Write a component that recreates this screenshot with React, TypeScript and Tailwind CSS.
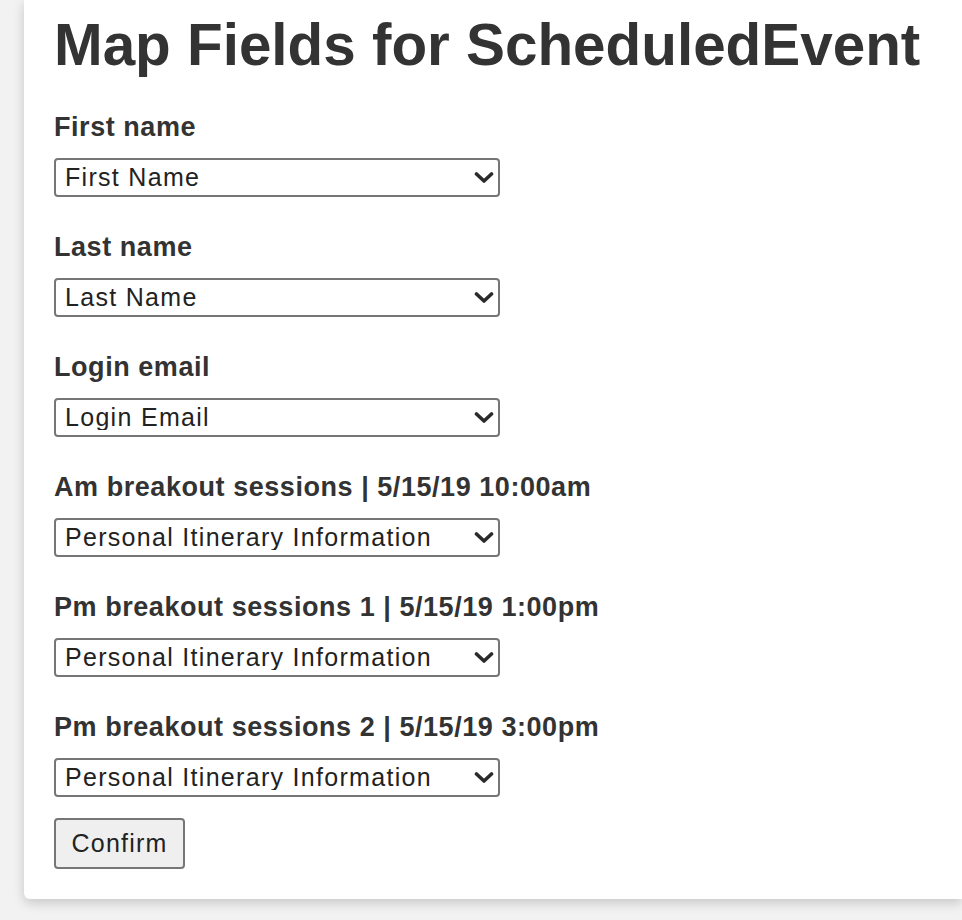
import React from "react";

const fields = [
  { label: "First name", value: "First Name" },
  { label: "Last name", value: "Last Name" },
  { label: "Login email", value: "Login Email" },
  { label: "Am breakout sessions | 5/15/19 10:00am", value: "Personal Itinerary Information" },
  { label: "Pm breakout sessions 1 | 5/15/19 1:00pm", value: "Personal Itinerary Information" },
  { label: "Pm breakout sessions 2 | 5/15/19 3:00pm", value: "Personal Itinerary Information" },
];

function Chevron() {
  return (
    <svg width="20" height="14" viewBox="0 0 20 14" className="pointer-events-none absolute right-[6px] top-[13px]">
      <path d="M2.5 3 L10 10 L17.5 3" fill="none" stroke="#2b2b2b" strokeWidth="3.6" strokeLinecap="round" strokeLinejoin="round" />
    </svg>
  );
}

export default function App() {
  return (
    <div className="min-h-[920px] bg-[#f2f2f2] text-[#333333]" style={{ fontFamily: '"Liberation Sans", Arial, Helvetica, sans-serif' }}>
      <div className="ml-[24px] rounded-bl-[6px] bg-white pb-[30px] pl-[30px] shadow-[0_4px_12px_rgba(0,0,0,0.18)]">
        <h1 className="whitespace-nowrap pt-[16px] text-[58.4px] font-bold leading-none">Map Fields for ScheduledEvent</h1>
        <div className="mt-[40px] flex flex-col gap-[37px]">
          {fields.map((f) => (
            <div key={f.label} className="flex flex-col gap-[17px]">
              <label className="text-[27px] font-bold leading-none tracking-[0.55px]">{f.label}</label>
              <div className="relative h-[39px] w-[446px]">
                <select
                  defaultValue={f.value}
                  className="h-[39px] w-[446px] appearance-none rounded-[4px] border-2 border-[#767676] bg-white pl-[9px] text-[25px] leading-none tracking-[1.3px] text-[#222222] outline-none"
                >
                  <option>{f.value}</option>
                </select>
                <Chevron />
              </div>
            </div>
          ))}
        </div>
        <button className="mt-[21px] h-[51px] w-[131px] rounded-[4px] border-2 border-[#767676] bg-[#efefef] text-[25px] leading-none tracking-[1.2px] text-[#222222]">
          Confirm
        </button>
      </div>
    </div>
  );
}
